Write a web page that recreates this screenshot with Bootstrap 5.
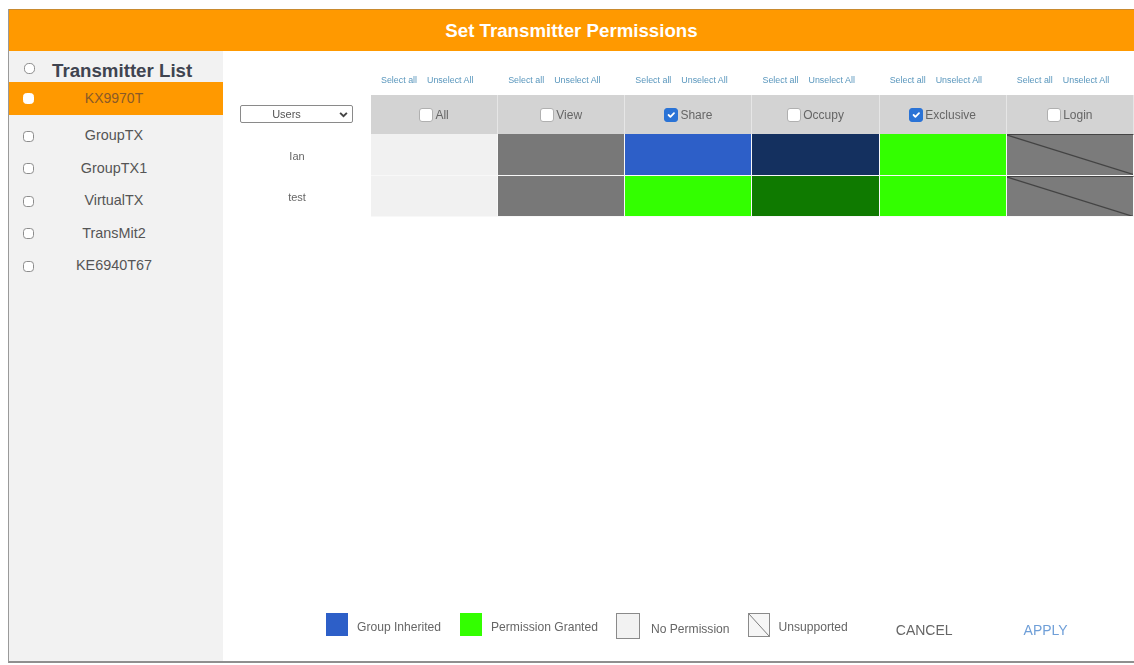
<!DOCTYPE html>
<html lang="en"><head><meta charset="utf-8"><title>Set Transmitter Permissions</title>
<link href="https://cdn.jsdelivr.net/npm/bootstrap@5.3.0/dist/css/bootstrap.min.css" rel="stylesheet">
<style>
html,body{height:665px;overflow:hidden;background:#fff}
body{font-family:"Liberation Sans",Arial,sans-serif;padding:9px 0 2px 8px;color:#666}
.frame{height:654px;border-left:1px solid #9a9a9a;border-bottom:2px solid #8f8f8f;filter:blur(.6px)}
.topbar{height:42px;background:#ff9900;border-top:1px solid #c98a2e;color:#fff;font-size:18.7px;font-weight:700;padding-top:2px}
.side{width:214px;background:#f2f2f2;flex:none}
.side-head{height:31px;padding:9px 0 0 15px;gap:17px;color:#3f4450;font-size:18.7px;font-weight:700}
.side-head .chk{margin-top:-5px}
.tx-row{height:32.5px;padding-left:14px;font-size:14.4px;color:#555}
.tx-row.on{height:33px;background:#ff9900;color:#8a5a28;margin-bottom:5px;font-size:14px}
.tx-row span{flex:1;text-align:center;padding-right:29px}
.chk{width:11px;height:11px;margin:0;border:1px solid #8d8d8d;border-radius:1.5px;flex:none;box-shadow:none!important}
.on .chk{background-color:#fff;border-color:#fff}
.col-users{width:148px;flex:none;padding-top:54px;font-size:11px;color:#666}
.user-pick{width:113px;height:18px;margin-left:17px;padding:0 20px 0 0;font-size:11px;line-height:16px;text-align:center;border:1px solid #8a8a8a;border-radius:2px;color:#555;background-image:url("data:image/svg+xml,%3csvg xmlns='http://www.w3.org/2000/svg' viewBox='0 0 16 16'%3e%3cpath fill='none' stroke='%23444' stroke-width='3.4' d='M2 5l6 6 6-6'/%3e%3c/svg%3e");background-position:right 4px center;background-size:9px 9px;box-shadow:none!important;font-family:inherit}
.user-row{height:41.5px}
.user-row:first-of-type{margin-top:12px}
.perm-links{height:44px;padding:22px 0 0 10px;font-size:8.9px;gap:10px;line-height:14px}
.perm-links a{color:#5a97bd;text-decoration:none}
.perm-head{height:39px;background:#d3d3d3;font-size:12px;color:#666;gap:2px;border-right:1px solid #e6e6e6}
.perm-head .chk{width:14px;height:14px;border-color:#b0b0b0}
.perm-head .chk:checked{background-color:#2a73d6;border-color:#2a73d6}
.cell{height:41.5px;border-bottom:1px solid #f8f8f8;border-right:1px solid #f8f8f8;position:relative}
.c-empty{background:#f1f1f1}.c-grey{background:#787878}.c-blue{background:#2d5fc8}.c-navy{background:#14305f}.c-green{background:#33ff00}.c-dark{background:#0f7a00}
.c-none{background:#7b7b7b;border-top:1px solid #444}
.c-none svg{position:absolute;inset:0;width:100%;height:100%}
.legend{padding:0 0 20px 103px;font-size:12.1px;color:#666}
.swatch{width:22px;height:23px;flex:none}
.boxed{width:24px;height:26px;border:1px solid #8a8a8a;background:#f2f2f2;flex:none;margin-top:3px}
.boxed.tiny{width:22px;height:24px;background:#f6f6f6;position:relative;margin-top:0}
.boxed svg{position:absolute;inset:0;width:100%;height:100%}
.act{padding:0;border:0;font-size:14px;background:none;margin-top:12px}
.act-cancel{color:#666;margin-left:48px}
.act-apply{color:#6f9fd8;margin-left:71px}
.lg1{margin:6px 19px 0 9px}.lg2{margin:6px 18px 0 9px}.lg3{margin:9px 18px 0 11px}.lg4{margin:6px 0 0 9px}
</style></head>
<body>
<div class="frame d-flex flex-column">
  <div class="topbar d-flex align-items-center justify-content-center">Set Transmitter Permissions</div>
  <div class="d-flex flex-grow-1">
    <div class="side">
      <div class="side-head d-flex align-items-center"><input class="form-check-input chk" type="checkbox" aria-label="All transmitters"><span>Transmitter List</span></div>
      <div class="tx-row on d-flex align-items-center"><input class="form-check-input chk" type="checkbox" aria-label="KX9970T"><span>KX9970T</span></div>
      <div class="tx-row d-flex align-items-center"><input class="form-check-input chk" type="checkbox" aria-label="GroupTX"><span>GroupTX</span></div>
      <div class="tx-row d-flex align-items-center"><input class="form-check-input chk" type="checkbox" aria-label="GroupTX1"><span>GroupTX1</span></div>
      <div class="tx-row d-flex align-items-center"><input class="form-check-input chk" type="checkbox" aria-label="VirtualTX"><span>VirtualTX</span></div>
      <div class="tx-row d-flex align-items-center"><input class="form-check-input chk" type="checkbox" aria-label="TransMit2"><span>TransMit2</span></div>
      <div class="tx-row d-flex align-items-center"><input class="form-check-input chk" type="checkbox" aria-label="KE6940T67"><span>KE6940T67</span></div>
    </div>
    <div class="flex-grow-1 d-flex flex-column">
      <div class="d-flex flex-grow-1">
        <div class="col-users">
          <select class="form-select user-pick" aria-label="Users"><option>Users</option></select>
          <div class="user-row d-flex align-items-center justify-content-center">Ian</div>
          <div class="user-row d-flex align-items-center justify-content-center">test</div>
        </div>
        <div class="flex-grow-1">
          <div class="row row-cols-6 g-0">
            <div class="col"><div class="perm-links d-flex"><a href="#">Select all</a><a href="#">Unselect All</a></div><div class="perm-head d-flex align-items-center justify-content-center"><input class="form-check-input chk" type="checkbox" aria-label="All"><span>All</span></div><div class="cell c-empty"></div><div class="cell c-empty"></div></div>
            <div class="col"><div class="perm-links d-flex"><a href="#">Select all</a><a href="#">Unselect All</a></div><div class="perm-head d-flex align-items-center justify-content-center"><input class="form-check-input chk" type="checkbox" aria-label="View"><span>View</span></div><div class="cell c-grey"></div><div class="cell c-grey"></div></div>
            <div class="col"><div class="perm-links d-flex"><a href="#">Select all</a><a href="#">Unselect All</a></div><div class="perm-head d-flex align-items-center justify-content-center"><input class="form-check-input chk" type="checkbox" checked aria-label="Share"><span>Share</span></div><div class="cell c-blue"></div><div class="cell c-green"></div></div>
            <div class="col"><div class="perm-links d-flex"><a href="#">Select all</a><a href="#">Unselect All</a></div><div class="perm-head d-flex align-items-center justify-content-center"><input class="form-check-input chk" type="checkbox" aria-label="Occupy"><span>Occupy</span></div><div class="cell c-navy"></div><div class="cell c-dark"></div></div>
            <div class="col"><div class="perm-links d-flex"><a href="#">Select all</a><a href="#">Unselect All</a></div><div class="perm-head d-flex align-items-center justify-content-center"><input class="form-check-input chk" type="checkbox" checked aria-label="Exclusive"><span>Exclusive</span></div><div class="cell c-green"></div><div class="cell c-green"></div></div>
            <div class="col"><div class="perm-links d-flex"><a href="#">Select all</a><a href="#">Unselect All</a></div><div class="perm-head d-flex align-items-center justify-content-center"><input class="form-check-input chk" type="checkbox" aria-label="Login"><span>Login</span></div><div class="cell c-none"><svg viewBox="0 0 100 100" preserveAspectRatio="none"><line x1="0" y1="0" x2="100" y2="100" stroke="#444" stroke-width="1.2" vector-effect="non-scaling-stroke"/></svg></div><div class="cell c-none"><svg viewBox="0 0 100 100" preserveAspectRatio="none"><line x1="0" y1="0" x2="100" y2="100" stroke="#444" stroke-width="1.2" vector-effect="non-scaling-stroke"/></svg></div></div>
          </div>
        </div>
      </div>
      <div class="legend d-flex align-items-center">
        <div class="swatch c-blue"></div><span class="lg1">Group Inherited</span>
        <div class="swatch c-green"></div><span class="lg2">Permission Granted</span>
        <div class="boxed"></div><span class="lg3">No Permission</span>
        <div class="boxed tiny"><svg viewBox="0 0 20 24" preserveAspectRatio="none"><line x1="0" y1="0" x2="20" y2="24" stroke="#777"/></svg></div><span class="lg4">Unsupported</span>
        <button type="button" class="act act-cancel">CANCEL</button>
        <button type="button" class="act act-apply">APPLY</button>
      </div>
    </div>
  </div>
</div>
<script src="https://cdn.jsdelivr.net/npm/bootstrap@5.3.0/dist/js/bootstrap.bundle.min.js"></script>
</body></html>
